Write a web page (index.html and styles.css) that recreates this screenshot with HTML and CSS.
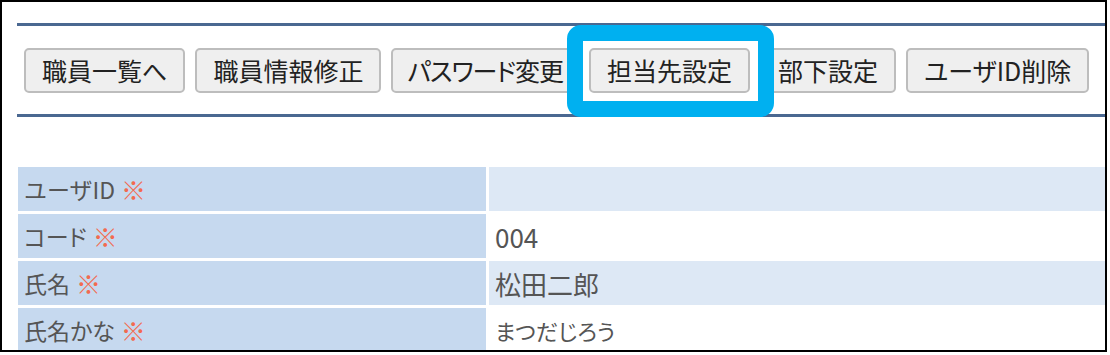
FILE: index.html
```html
<!DOCTYPE html>
<html lang="ja">
<head>
  <meta charset="UTF-8" />
  <meta name="viewport" content="width=device-width, initial-scale=1.0"/>
  <title>職員情報</title>
  <link rel="stylesheet" href="styles.css">
</head>
<body>

  <div class="frame">

    <div class="toolbar">
      <button class="btn">職員一覧へ</button>
      <button class="btn">職員情報修正</button>
      <button class="btn narrow">パスワード変更</button>
      <button class="btn">担当先設定</button>
      <button class="btn">部下設定</button>
      <button class="btn">ユーザID削除</button>
    </div>

    <!-- callout around the button being explained -->
    <div class="highlight"></div>

    <div class="info">
      <div class="label wide">ユーザID <span class="req">※</span></div>
      <div class="value odd"></div>

      <div class="label">コード <span class="req">※</span></div>
      <div class="value">004</div>

      <div class="label">氏名 <span class="req">※</span></div>
      <div class="value odd">松田二郎</div>

      <div class="label">氏名かな <span class="req">※</span></div>
      <div class="value kana">まつだじろう</div>
    </div>

  </div>

</body>
</html>
```

FILE: styles.css
```css
body {
  margin: 0;
  background: #fff;
  font-family: "Noto Sans CJK JP", "Noto Sans", sans-serif;
}

.frame {
  position: relative;
  width: 1107px;
  height: 352px;
  border: 2px solid #000;
  box-sizing: border-box;
  overflow: hidden;
  background: #fff;
}

.toolbar {
  margin: 21px 0 0 15px;
  padding: 22px 0 21px 7px;
  border-top: 3px solid #4a6891;
  border-bottom: 3px solid #4a6891;
  display: flex;
  gap: 10px;
}

.btn {
  height: 45px;
  padding: 0 16px;
  font-family: inherit;
  font-size: 25px;
  line-height: 1;
  color: #222;
  background: #efefef;
  border: 2px solid #bdbdbd;
  border-radius: 5px;
  font-feature-settings: "palt";
  white-space: nowrap;
}

.btn.narrow {
  padding: 0 14px;
  letter-spacing: -1px;
}

.highlight {
  position: absolute;
  left: 565px;
  top: 23px;
  width: 207px;
  height: 92px;
  border: 16px solid #00b0f0;
  border-radius: 14px;
  box-sizing: border-box;
}

.info {
  margin: 50px 0 0 16px;
  display: grid;
  grid-template-columns: 468px 1fr;
  grid-auto-rows: 44px;
  column-gap: 3px;
  row-gap: 3px;
}

.label,
.value {
  display: flex;
  align-items: center;
  padding-left: 6px;
  color: #555;
  font-size: 23px;
  font-feature-settings: "palt";
}

.label {
  background: #c6d9ef;
}

.label.wide {
  font-feature-settings: normal;
}

.value {
  background: #fff;
  font-size: 26px;
}

.value.odd {
  background: #dde8f5;
}

.value.kana {
  font-size: 22px;
}

.req {
  color: #f26a50;
  font-size: 25px;
  margin-left: 6px;
}
```
